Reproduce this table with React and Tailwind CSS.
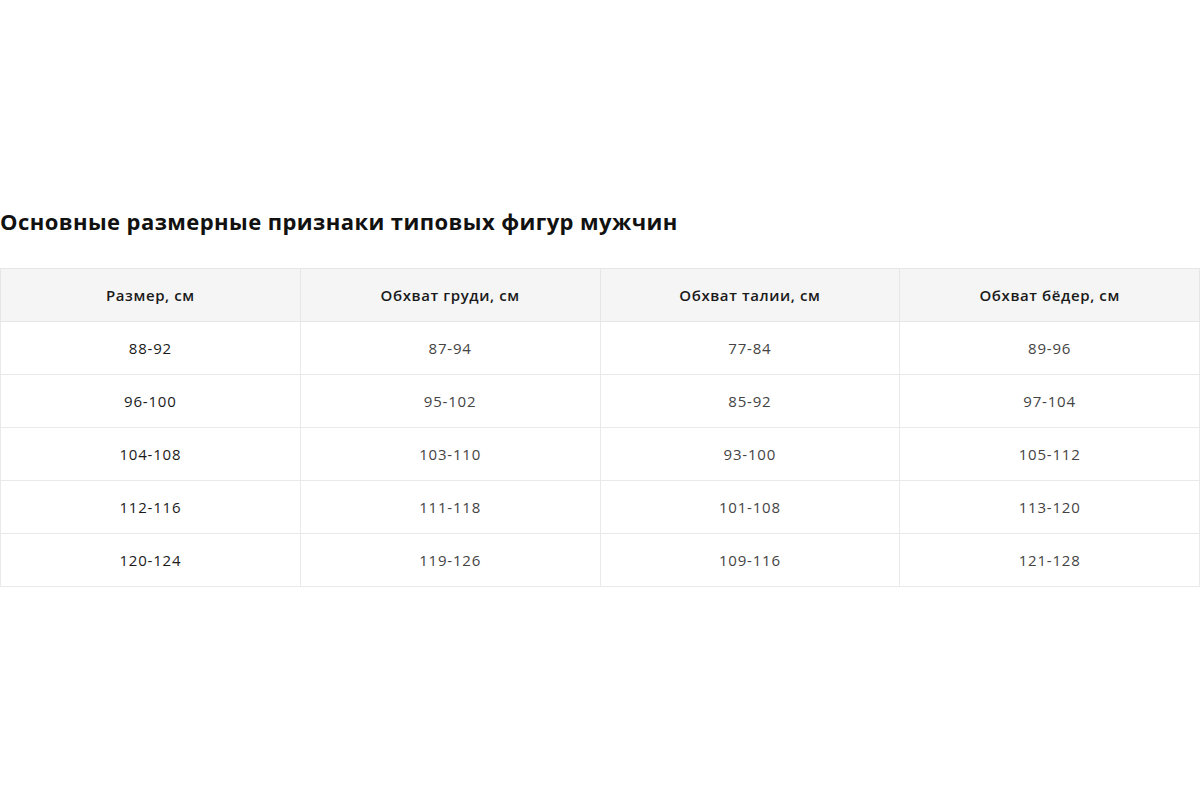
import React from 'react';

const rows = [
  ['88-92', '87-94', '77-84', '89-96'],
  ['96-100', '95-102', '85-92', '97-104'],
  ['104-108', '103-110', '93-100', '105-112'],
  ['112-116', '111-118', '101-108', '113-120'],
  ['120-124', '119-126', '109-116', '121-128'],
];

const heads = ['Размер, см', 'Обхват груди, см', 'Обхват талии, см', 'Обхват бёдер, см'];

export default function App() {
  return (
    <div className="w-[1200px] h-[800px] bg-white font-['Open_Sans',sans-serif] text-[#111]">
      <div className="pt-[203px]">
        <h2 className="text-[22px] leading-[36px] font-bold tracking-[0.42px] text-[#111]">
          Основные размерные признаки типовых фигур мужчин
        </h2>
        <table className="mt-[29px] w-full border-collapse table-fixed">
          <thead>
            <tr className="bg-[#f5f5f5]">
              {heads.map((h) => (
                <th key={h} className="h-[53px] border border-[#e6e6e6] text-[15px] tracking-[0.6px] font-semibold text-[#1a1a1a] text-center">
                  {h}
                </th>
              ))}
            </tr>
          </thead>
          <tbody>
            {rows.map((r) => (
              <tr key={r[0]}>
                {r.map((c, i) => (
                  <td
                    key={i}
                    className={
                      'h-[53px] border border-[#e9e9e9] text-center text-[15px] tracking-[0.8px] pt-px ' +
                      (i === 0 ? 'font-medium text-[#1a1a1a]' : 'font-normal text-[#444]')
                    }
                  >
                    {c}
                  </td>
                ))}
              </tr>
            ))}
          </tbody>
        </table>
      </div>
    </div>
  );
}
